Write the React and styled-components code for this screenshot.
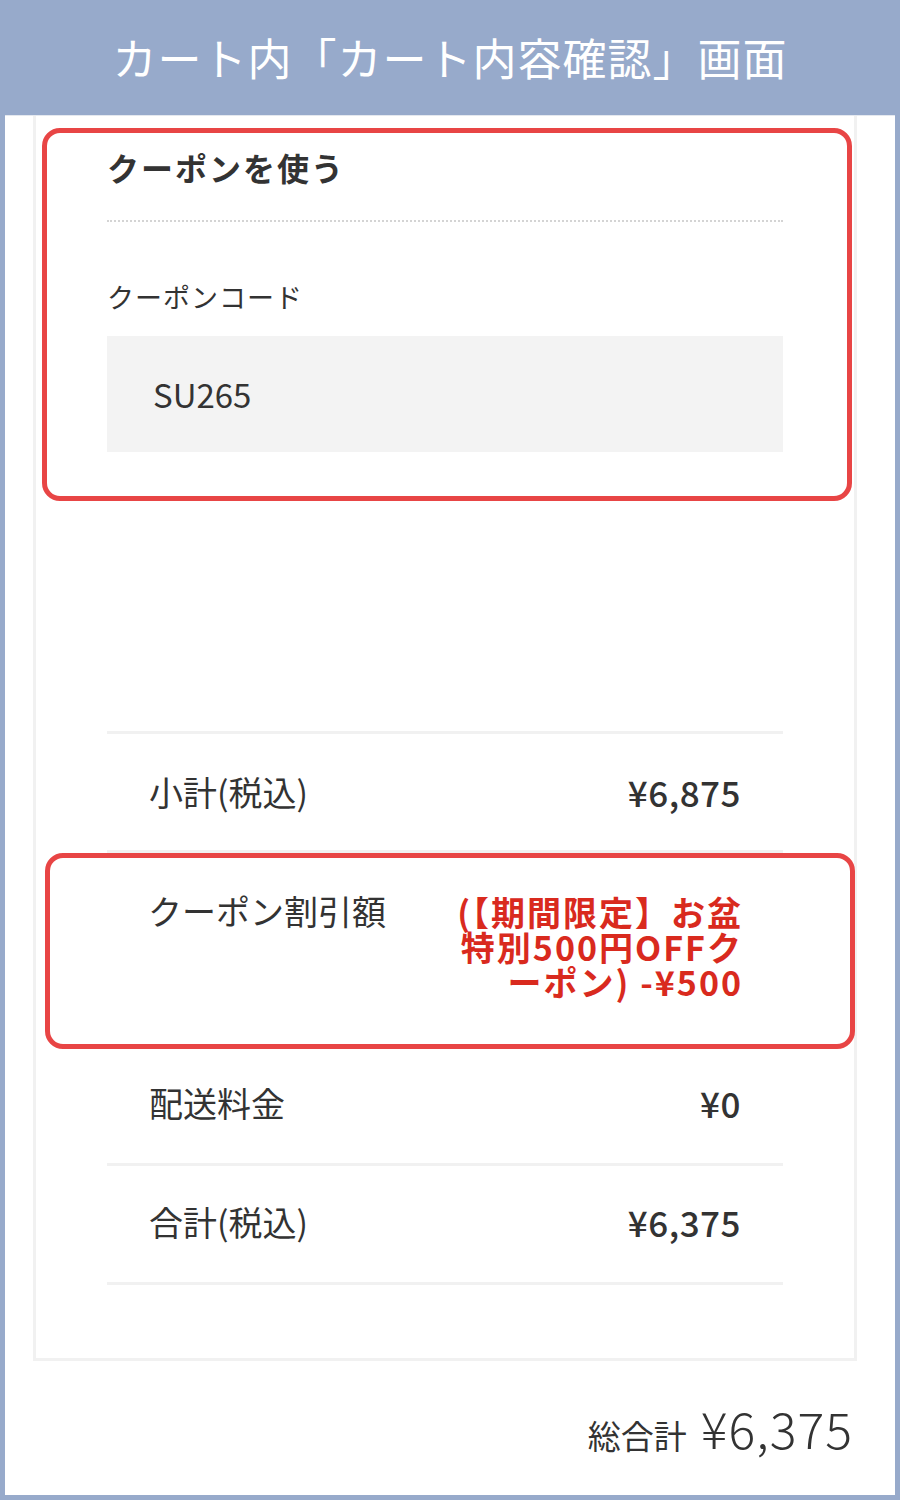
import React from "react";
import styled, { createGlobalStyle } from "styled-components";

const Global = createGlobalStyle`
  html, body { margin: 0; padding: 0; }
  body {
    background: #97aacb;
    font-family: "Noto Sans CJK JP", "Noto Sans", sans-serif;
    color: #333;
  }
`;

const Page = styled.div`
  width: 900px;
  height: 1500px;
  background: #97aacb;
  display: flex;
  flex-direction: column;
  box-sizing: border-box;
  padding-bottom: 5px;
`;

const Header = styled.header`
  height: 115px;
  display: flex;
  align-items: center;
  justify-content: center;
  flex-shrink: 0;
`;

const Title = styled.h1`
  margin: 0;
  color: #fff;
  font-size: 44px;
  font-weight: 400;
  letter-spacing: 1px;
  line-height: 1;
  padding-bottom: 2px;
`;

const Panel = styled.main`
  flex: 1;
  margin: 0 5px;
  background: #fff;
  border-top: 1px solid #e4e8ef;
  display: flex;
  flex-direction: column;
`;

const Card = styled.section`
  margin: 0 38px 0 28px;
  border: 3px solid #f1f1f1;
  border-top: none;
  padding: 12px 71px 73px;
  display: flex;
  flex-direction: column;
`;

const Highlight = styled.div`
  border: 5px solid #e84545;
  border-radius: 18px;
  margin: ${(p) => p.$margin};
  padding: ${(p) => p.$padding};
`;

const SectionHeading = styled.h2`
  margin: 0;
  font-size: 32px;
  font-weight: 700;
  line-height: 44px;
  letter-spacing: 2px;
  padding-bottom: 31px;
  border-bottom: 2px dotted #d4d4d4;
`;

const FieldLabel = styled.div`
  margin-top: 57px;
  font-size: 27px;
  line-height: 36px;
  letter-spacing: 1px;
`;

const CodeInput = styled.div`
  margin-top: 21px;
  height: 116px;
  background: #f3f3f3;
  display: flex;
  align-items: center;
  padding-left: 46px;
  font-size: 33px;
  color: #333;
`;

const Spacer = styled.div`
  height: 230px;
`;

const Row = styled.div`
  display: flex;
  justify-content: space-between;
  align-items: ${(p) => (p.$top ? "flex-start" : "center")};
  padding: ${(p) => p.$padding || "36px 42px"};
  border-top: ${(p) => (p.$line ? "3px solid #f1f1f1" : "none")};
  border-bottom: ${(p) => (p.$lineBottom ? "3px solid #f1f1f1" : "none")};
`;

const Label = styled.span`
  font-size: 34px;
  line-height: 44px;
  white-space: nowrap;
`;

const Value = styled.span`
  font-size: 35px;
  line-height: 44px;
  font-weight: 500;
  letter-spacing: 0.5px;
  white-space: nowrap;
`;

const Discount = styled.span`
  display: flex;
  flex-direction: column;
  align-items: flex-end;
  margin: 5px -2px 0 0;
  color: #d92a1e;
  font-weight: 700;
`;

const DiscountLine = styled.span`
  display: block;
  font-size: 34px;
  line-height: 35px;
  height: 35px;
  letter-spacing: 2px;
  white-space: nowrap;
`;

const Total = styled.div`
  margin: 30px 42px 0 0;
  display: flex;
  justify-content: flex-end;
  align-items: baseline;
  gap: 14px;
  color: #333;
`;

const TotalLabel = styled.span`
  font-size: 33px;
  font-weight: 400;
`;

const TotalValue = styled.span`
  font-size: 50px;
  font-weight: 300;
  letter-spacing: 1px;
`;

export default function App() {
  return (
    <>
      <Global />
      <Page>
        <Header>
          <Title>カート内「カート内容確認」画面</Title>
        </Header>
        <Panel>
          <Card>
            <Highlight $margin="0 -69px 0 -65px" $padding="12px 64px 44px 60px">
              <SectionHeading>クーポンを使う</SectionHeading>
              <FieldLabel>クーポンコード</FieldLabel>
              <CodeInput>SU265</CodeInput>
            </Highlight>
            <Spacer />
            <Row $line>
              <Label>小計(税込)</Label>
              <Value>¥6,875</Value>
            </Row>
            <Row $line $padding="0" />
            <Highlight $margin="0 -72px 0 -62px" $padding="31px 109px 45px 98px">
              <Row $top $padding="0">
                <Label>クーポン割引額</Label>
                <Discount>
                  <DiscountLine>(【期間限定】お盆</DiscountLine>
                  <DiscountLine>特別500円OFFク</DiscountLine>
                  <DiscountLine>ーポン) -¥500</DiscountLine>
                </Discount>
              </Row>
            </Highlight>
            <Row $padding="32px 42px 38px">
              <Label>配送料金</Label>
              <Value>¥0</Value>
            </Row>
            <Row $line $lineBottom $padding="34px 42px 38px">
              <Label>合計(税込)</Label>
              <Value>¥6,375</Value>
            </Row>
          </Card>
          <Total>
            <TotalLabel>総合計</TotalLabel>
            <TotalValue>¥6,375</TotalValue>
          </Total>
        </Panel>
      </Page>
    </>
  );
}
